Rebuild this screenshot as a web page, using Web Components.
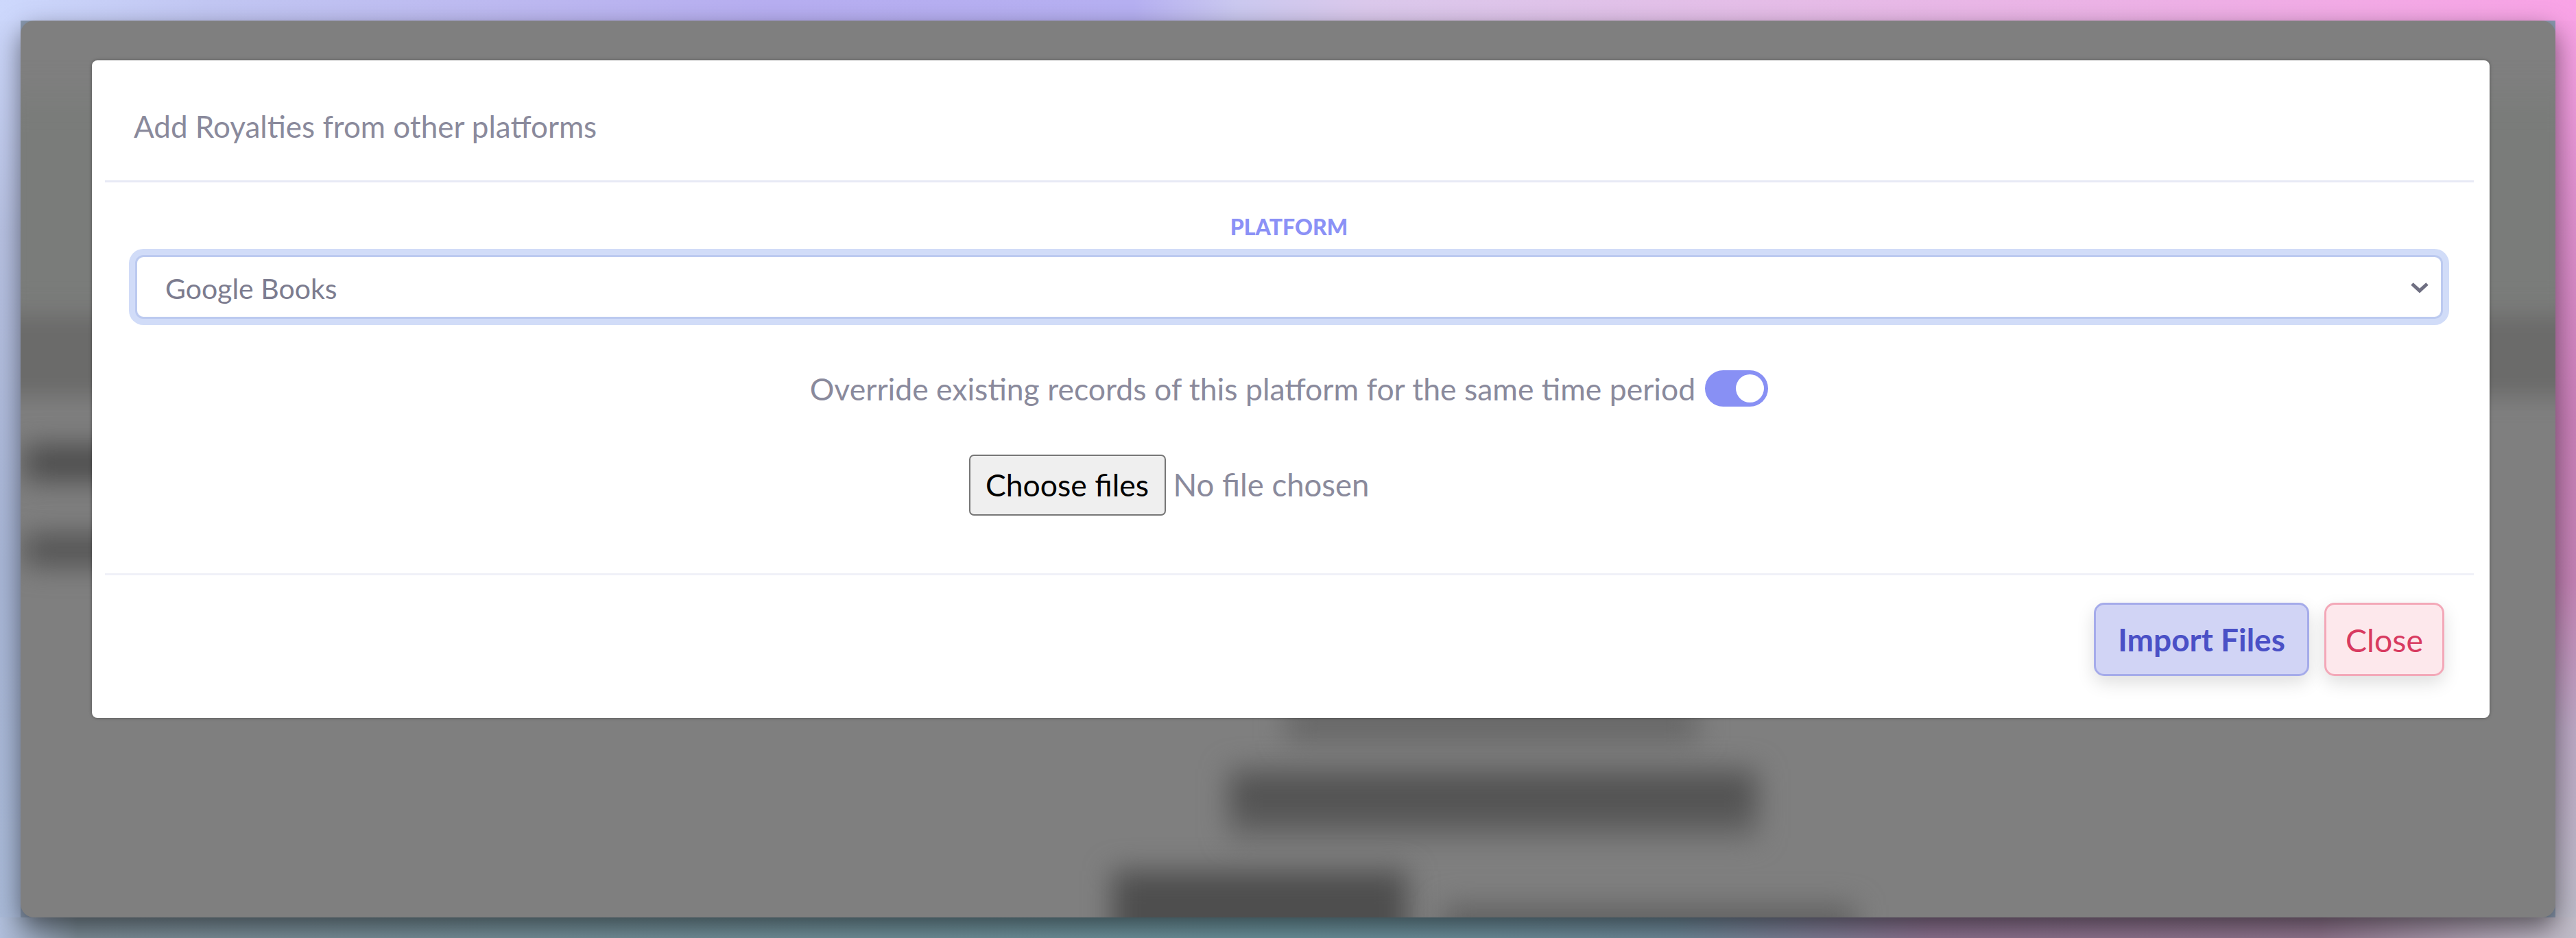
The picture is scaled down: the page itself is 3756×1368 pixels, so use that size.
<!DOCTYPE html>
<html lang="en">
<head>
<meta charset="utf-8">
<title>Add Royalties</title>
<style>
    html, body { margin: 0; padding: 0; }
    body { font-family: "Lato", "Liberation Sans", sans-serif; }
</style>
</head>
<body>
<x-desktop>
    <x-window>
        <x-ghost slot="ghost"></x-ghost>
        <x-modal>
            <span slot="title">Add Royalties from other platforms</span>
            <x-field label="PLATFORM">
                <x-select>Google Books</x-select>
            </x-field>
            <x-switch-row>Override existing records of this platform for the same time period</x-switch-row>
            <x-file></x-file>
            <x-button slot="footer" kind="primary">Import Files</x-button>
            <x-button slot="footer" kind="danger">Close</x-button>
        </x-modal>
    </x-window>
</x-desktop>

<script>
class BaseElement extends HTMLElement {

    static template() {
        return ``;
    }

    constructor() {
        super();
        this.attachShadow({ mode: 'open' });
        this.shadowRoot.innerHTML = this.constructor.template(this);
    }

}

class XDesktop extends BaseElement {

    static template() {
        return `
            <style>
                :host {
                    display: block;
                    box-sizing: border-box;
                    width: 3756px;
                    height: 1368px;
                    padding: 30px;
                    overflow: hidden;
                    background-color: #8a9ab0;
                    background-image:
                        linear-gradient(90deg, #cdd8fc 0%, #c2c7f3 8%, #bdb9f1 20%, #b7aef1 30%, #b6b0f2 44%, #cbc9f0 48%, #dbc9ec 53%, #e5bee8 68%, #eeb0e6 85%, #f9a3e6 100%),
                        linear-gradient(90deg, #b0bedb 0%, #7d8d98 3%, #75909a 20%, #6b929c 50%, #6f8a9a 65%, #8c7290 75%, #91768f 90%, #c0bcc8 100%),
                        linear-gradient(180deg, #cdd8fc 0%, #b7c1e2 25%, #a8b6d6 60%, #a9bad8 100%),
                        linear-gradient(180deg, #f9a3e6 0%, #e090cf 20%, #c97fb8 45%, #c382b4 62%, #bba8c4 78%, #bcbcc8 100%);
                    background-repeat: no-repeat;
                    background-size: 100% 30px, 100% 30px, 30px 100%, 30px 100%;
                    background-position: 0 0, 0 100%, 0 0, 100% 0;
                }
            </style>
            <slot></slot>
        `;
    }

}

class XWindow extends BaseElement {

    static template() {
        return `
            <style>
                :host {
                    display: block;
                    box-sizing: border-box;
                    position: relative;
                    width: 3696px;
                    height: 1308px;
                    padding: 58px 96px 0 104px;
                    border-radius: 20px;
                    background: #7f7f7f;
                    box-shadow: 0 14px 36px rgba(0, 0, 0, 0.5);
                    overflow: hidden;
                }
            </style>
            <slot name="ghost"></slot>
            <slot></slot>
        `;
    }

}

// blurred page behind the dialog
class XGhost extends BaseElement {

    static template() {
        return `
            <style>
                :host {
                    display: block;
                    position: absolute;
                    inset: 0;
                }

                div {
                    position: absolute;
                    filter: blur(20px);
                }
            </style>
            <div style="left:-40px;right:-40px;top:110px;height:320px;background:#7a7c7a;filter:blur(22px)"></div>
            <div style="left:-40px;right:-40px;top:428px;height:120px;background:#6b6b6a;filter:blur(16px)"></div>
            <div style="left:6px;top:620px;width:170px;height:50px;background:#4a4a4a"></div>
            <div style="left:6px;top:750px;width:170px;height:44px;background:#505050"></div>
            <div style="left:1845px;top:1000px;width:600px;height:50px;background:#666"></div>
            <div style="left:1762px;top:1092px;width:770px;height:100px;background:linear-gradient(#5a5a5a,#505050 45%,#6a6a6a)"></div>
            <div style="left:1592px;top:1240px;width:430px;height:130px;background:#4e4e4e"></div>
            <div style="left:2075px;top:1290px;width:600px;height:70px;background:#626262"></div>
        `;
    }

}

class XModal extends BaseElement {

    static template() {
        return `
            <style>
                :host {
                    display: block;
                    box-sizing: border-box;
                    position: relative;
                    width: 3496px;
                    height: 959px;
                    background: #fff;
                    border-radius: 8px;
                    box-shadow: 0 0 5px rgba(0, 0, 0, 0.35);
                    color: #8a8a9c;
                }

                header {
                    display: flex;
                    align-items: center;
                    box-sizing: border-box;
                    height: 178px;
                    margin: 0 23px 0 19px;
                    padding: 17px 0 0 42px;
                    border-bottom: 3px solid #e7e9f5;
                    font-size: 44px;
                }

                main {
                    display: flex;
                    flex-direction: column;
                    padding: 40px 68px 0 63px;
                }

                footer {
                    display: flex;
                    justify-content: flex-end;
                    gap: 22px;
                    margin: 84px 23px 0 19px;
                    padding: 40px 43px 0 0;
                    border-top: 3px solid #f0f1f8;
                }
            </style>
            <header><slot name="title"></slot></header>
            <main><slot></slot></main>
            <footer><slot name="footer"></slot></footer>
        `;
    }

}

class XField extends BaseElement {

    static template(el) {
        return `
            <style>
                :host {
                    display: block;
                }

                label {
                    display: block;
                    height: 50px;
                    margin-bottom: 16px;
                    line-height: 50px;
                    text-align: center;
                    font-size: 32px;
                    font-weight: 900;
                    color: #8b91f6;
                }
            </style>
            <label>${el.getAttribute('label')}</label>
            <slot></slot>
        `;
    }

}

class XSelect extends BaseElement {

    static template() {
        return `
            <style>
                :host {
                    display: flex;
                    align-items: center;
                    justify-content: space-between;
                    box-sizing: border-box;
                    height: 93px;
                    padding: 3px 17px 0 41px;
                    background: #fff;
                    border: 3px solid #bccaf0;
                    border-radius: 12px;
                    box-shadow: 0 0 0 9px rgba(190, 205, 245, 0.7);
                    color: #7c7c8f;
                    font-size: 41px;
                }

                svg {
                    display: block;
                    width: 28px;
                    height: 18px;
                    margin-top: -3px;
                }
            </style>
            <slot></slot>
            <svg viewBox="0 0 28 18" aria-hidden="true">
                <path d="M3 4l11 10L25 4" fill="none" stroke="#6f6f82" stroke-width="5"/>
            </svg>
        `;
    }

}

class XSwitchRow extends BaseElement {

    static template() {
        return `
            <style>
                :host {
                    display: flex;
                    align-items: center;
                    justify-content: center;
                    gap: 14px;
                    height: 53px;
                    margin-top: 75px;
                    font-size: 44.5px;
                    color: #8a8a9c;
                }

                .toggle {
                    display: flex;
                    align-items: center;
                    justify-content: flex-end;
                    box-sizing: border-box;
                    width: 92px;
                    height: 53px;
                    padding-right: 6px;
                    border-radius: 27px;
                    background: #8890f4;
                }

                .knob {
                    width: 41px;
                    height: 41px;
                    border-radius: 50%;
                    background: #fff;
                }
            </style>
            <span><slot></slot></span>
            <span class="toggle"><span class="knob"></span></span>
        `;
    }

}

class XFile extends BaseElement {

    static template() {
        return `
            <style>
                :host {
                    display: flex;
                    align-items: center;
                    gap: 11px;
                    box-sizing: border-box;
                    width: 934px;
                    height: 89px;
                    margin: 70px auto 0;
                    font-size: 45.5px;
                    color: #8a8a9c;
                }

                .choose {
                    display: flex;
                    align-items: center;
                    justify-content: center;
                    box-sizing: border-box;
                    width: 287px;
                    height: 89px;
                    padding-bottom: 3px;
                    background: #efefef;
                    border: 2.4px solid #767676;
                    border-radius: 7px;
                    color: #000;
                    font-size: 44.5px;
                }

                .none {
                    padding-bottom: 3px;
                }
            </style>
            <span class="choose">Choose files</span>
            <span class="none">No file chosen</span>
        `;
    }

}

class XButton extends BaseElement {

    static template(el) {
        const primary = el.getAttribute('kind') == 'primary';
        return `
            <style>
                :host {
                    display: flex;
                    align-items: center;
                    justify-content: center;
                    box-sizing: border-box;
                    height: 107px;
                    padding: 0 ${primary ? 32 : 28}px;
                    border-radius: 15px;
                    border: 3px solid ${primary ? '#a5abea' : '#f3a8b8'};
                    background: ${primary ? '#d1d4f5' : '#fde8ec'};
                    color: ${primary ? '#4a50c6' : '#d83a60'};
                    font-size: ${primary ? 46 : 46.5}px;
                    font-weight: ${primary ? 700 : 400};
                    box-shadow: 0 10px 26px rgba(0, 0, 0, 0.13);
                }
            </style>
            <slot></slot>
        `;
    }

}

customElements.define('x-desktop', XDesktop);
customElements.define('x-window', XWindow);
customElements.define('x-ghost', XGhost);
customElements.define('x-modal', XModal);
customElements.define('x-field', XField);
customElements.define('x-select', XSelect);
customElements.define('x-switch-row', XSwitchRow);
customElements.define('x-file', XFile);
customElements.define('x-button', XButton);
</script>
</body>
</html>
